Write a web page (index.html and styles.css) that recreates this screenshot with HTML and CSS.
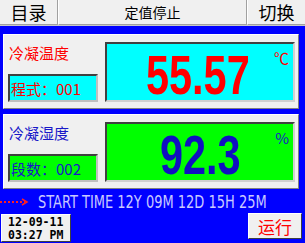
FILE: index.html
```html
<!DOCTYPE html>
<html lang="zh">
<head>
<meta charset="utf-8">
<link rel="stylesheet" href="styles.css">
</head>
<body>
<div class="screen">
  <div class="topbar">
    <div class="tbtn tbtn-side">目录</div>
    <div class="tbtn tbtn-mid">定值停止</div>
    <div class="tbtn tbtn-side">切换</div>
  </div>
  <div class="panels">
    <div class="panel">
      <div class="left">
        <div class="label red">冷凝温度</div>
        <div class="small-box cyan red">程式：001</div>
      </div>
      <div class="big-box cyan">
        <span class="value red-v">55.57</span>
        <span class="unit red">℃</span>
      </div>
    </div>
    <div class="panel">
      <div class="left">
        <div class="label blue">冷凝湿度</div>
        <div class="small-box green blue">段数：002</div>
      </div>
      <div class="big-box green">
        <span class="value blue-v">92.3</span>
        <span class="unit blue">%</span>
      </div>
    </div>
  </div>
  <div class="status">
    <svg class="arrow" width="30" height="8" viewBox="0 0 30 8">
      <line x1="0" y1="4" x2="25" y2="4" stroke="#ff2020" stroke-width="2" stroke-dasharray="2 2"/>
      <polyline points="22,1 27,4 22,7" fill="none" stroke="#ff2020" stroke-width="1.5"/>
    </svg>
    <span class="start">START TIME 12Y 09M 12D 15H 25M</span>
  </div>
  <div class="footer">
    <div class="clock">
      <div class="clock-line">12-09-11</div>
      <div class="clock-line">03:27 PM</div>
    </div>
    <div class="run">运行</div>
  </div>
</div>
</body>
</html>
```
FILE: styles.css
```css
html, body {
  margin: 0;
  padding: 0;
  background: #0000ff;
}
.screen {
  width: 305px;
  height: 243px;
  background: #0000ff;
  display: flex;
  flex-direction: column;
  font-family: "Noto Sans CJK SC", "DejaVu Sans", sans-serif;
  overflow: hidden;
}
.topbar {
  display: flex;
  height: 26px;
  box-sizing: border-box;
  background: #f0f0f0;
  border-bottom: 1px solid #c8c8c8;
}
.tbtn {
  display: flex;
  align-items: center;
  justify-content: center;
  color: #000;
  box-sizing: border-box;
  border-right: 1px solid #a0a0a0;
  border-bottom: 1px solid #a0a0a0;
  background: #f0f0f0;
}
.tbtn-side {
  width: 58px;
  font-size: 18px;
}
.tbtn-mid {
  flex: 1;
  font-size: 14px;
  border-left: 1px solid #ffffff;
}
.tbtn-side:last-child {
  border-left: 1px solid #ffffff;
  border-right: none;
}
.panels {
  display: flex;
  flex-direction: column;
  gap: 5px;
  padding: 8px 6px 0 3px;
}
.panel {
  display: flex;
  background: #f0f0f0;
  border: 1px solid;
  border-color: #ffffff #808080 #808080 #ffffff;
  height: 75px;
  box-sizing: border-box;
  padding: 7px 3px 6px 4px;
  gap: 7px;
}
.left {
  display: flex;
  flex-direction: column;
  justify-content: space-between;
  width: 90px;
  padding-top: 2px;
}
.label {
  font-size: 15px;
  line-height: 18px;
  padding-left: 1px;
}
.small-box {
  height: 28px;
  box-sizing: border-box;
  border: 2px solid;
  border-color: #404040 #c0c0c0 #c0c0c0 #404040;
  font-size: 15px;
  display: flex;
  align-items: center;
  padding-left: 1px;
}
.big-box {
  flex: 1;
  display: flex;
  align-items: flex-start;
  box-sizing: border-box;
  border: 2px solid;
  border-color: #404040 #d0d0d0 #d0d0d0 #404040;
  position: relative;
}
.cyan { background: #00ffff; }
.green { background: #00ff00; }
.red { color: #ff0000; }
.blue { color: #1818c8; }
.value {
  font-family: "Liberation Sans", Arial, sans-serif;
  font-weight: bold;
  font-size: 56px;
  line-height: 56px;
  display: inline-block;
  transform: scaleX(0.74);
  transform-origin: left top;
  margin-top: 3px;
}
.red-v { color: #ff0000; margin-left: 39px; }
.blue-v { color: #1010c0; margin-left: 53px; }
.unit {
  position: absolute;
  right: 4px;
  top: 6px;
  font-size: 15px;
  line-height: 16px;
}
.status {
  display: flex;
  align-items: center;
  height: 24px;
  gap: 8px;
  padding-top: 1px;
  box-sizing: border-box;
}
.arrow {
  flex: none;
}
.start {
  font-family: "DejaVu Sans Condensed", "DejaVu Sans", sans-serif;
  color: #c8c8ff;
  font-size: 17px;
  line-height: 20px;
  display: inline-block;
  white-space: nowrap;
  transform: scaleX(0.85);
  transform-origin: left center;
}
.footer {
  display: flex;
  justify-content: space-between;
  align-items: flex-start;
  padding: 0 3px 0 1px;
}
.clock {
  background: #f0f0f0;
  width: 70px;
  height: 28px;
  margin-top: 1px;
  box-sizing: border-box;
  border: 1px solid;
  border-color: #ffffff #404040 #404040 #ffffff;
  font-family: "DejaVu Sans Mono", monospace;
  font-weight: bold;
  font-size: 11.5px;
  padding: 1px 0 0 6px;
  color: #000;
  display: flex;
  flex-direction: column;
}
.clock-line {
  height: 13px;
  line-height: 13px;
  overflow: hidden;
}
.run {
  width: 54px;
  height: 26px;
  box-sizing: border-box;
  background: #f0f0f0;
  border: 1px solid;
  border-color: #ffffff #404040 #404040 #ffffff;
  color: #ff0000;
  font-size: 17px;
  display: flex;
  align-items: center;
  justify-content: center;
}
```
